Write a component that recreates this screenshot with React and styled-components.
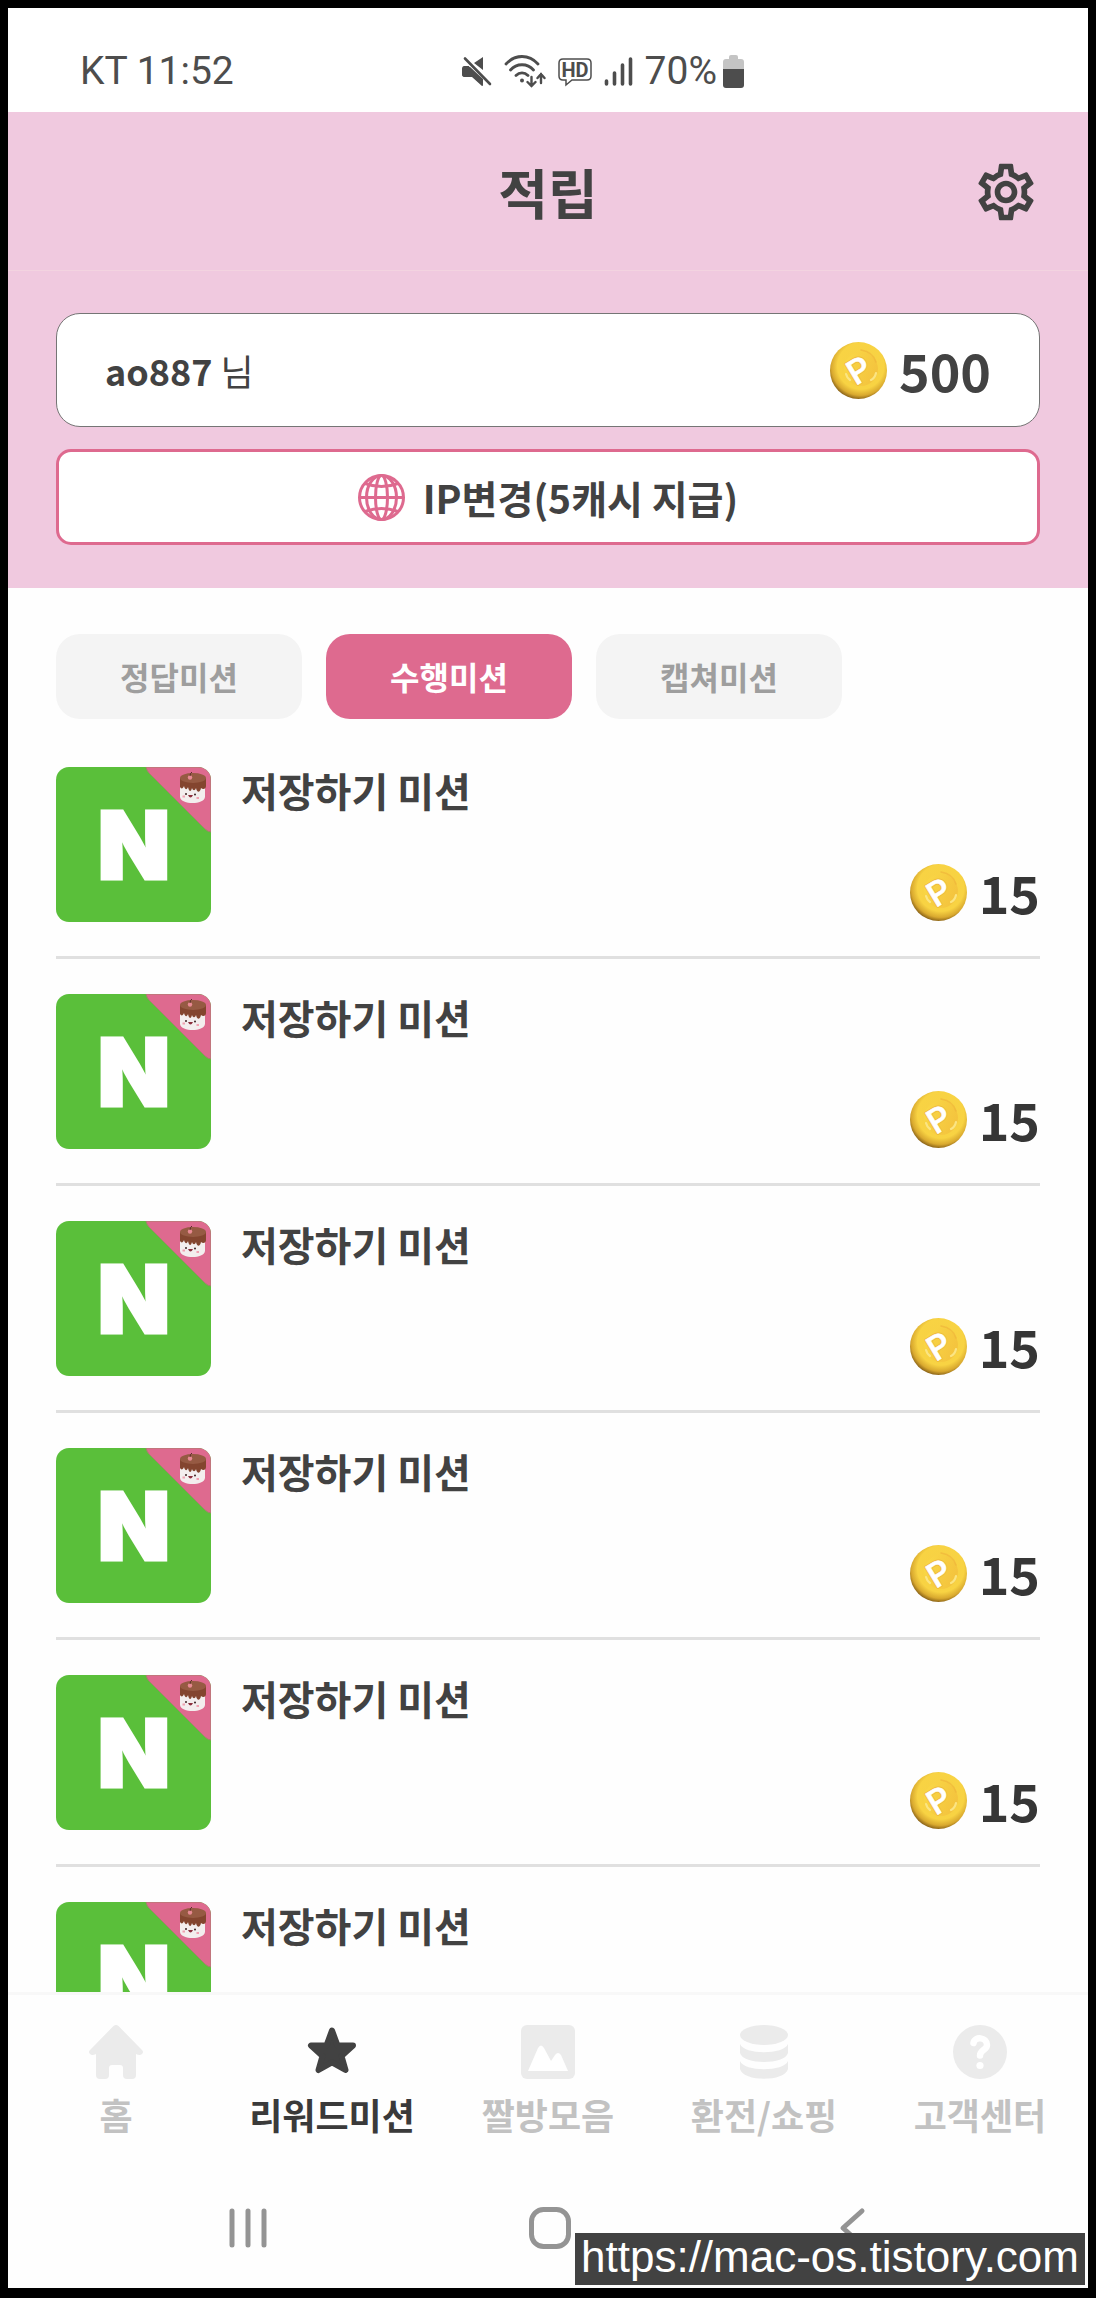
import React, { useId, useState } from 'react'
import styled, { createGlobalStyle, ThemeProvider } from 'styled-components'
import { MdOutlineSettings } from 'react-icons/md'

const theme = {
  colors: {
    text: '#424242',
    pinkLight: '#f0c9df',
    pinkLine: '#f3d3e0',
    pink: '#de6a8f',
    grey: '#9e9e9e',
    greyTab: '#f4f4f4',
    greyLine: '#e0e0e0',
    greyNav: '#c2c2c2',
    greyIcon: '#ebebeb',
    system: '#949494'
  },
  gutter: '48px'
}

const GlobalStyle = createGlobalStyle`
  * {
    box-sizing: border-box;
  }

  body {
    margin: 0;
    background: #000;
    color: ${theme.colors.text};
    font-family: 'Noto Sans CJK KR', 'Noto Sans', sans-serif;
  }

  button {
    padding: 0;
    border: 0;
    background: none;
    color: inherit;
    font: inherit;
    cursor: pointer;
  }

  svg {
    display: block;
    flex: none;
  }
`

const Frame = styled.div`
  position: relative;
  display: flex;
  flex-direction: column;
  height: 100vh;
  border: 8px solid #000;
  border-bottom-width: 10px;
  background: #fefefe;
`

const StatusBar = styled.div`
  display: grid;
  grid-template-columns: 42% 1fr;
  align-items: center;
  padding: 33px 0 11px;
  background: #fff;
  color: #4d4d4d;
  font-family: Roboto, sans-serif;
  font-size: 39px;
  line-height: 60px;
`

const StatusTime = styled.div`
  padding-left: 72px;
`

const StatusIcons = styled.div`
  display: flex;
  align-items: center;
  gap: 12px;
`

const Battery = styled.span`
  display: flex;
  align-items: center;
  gap: 6px;
`

const Header = styled.header`
  display: grid;
  grid-template-columns: 1fr auto 1fr;
  align-items: center;
  padding: 45px ${({ theme }) => theme.gutter} 43px;
  border-bottom: 1px solid ${({ theme }) => theme.colors.pinkLine};
  background: ${({ theme }) => theme.colors.pinkLight};
`

const Title = styled.h1`
  grid-column: 2;
  margin: 0;
  font-size: 54px;
  font-weight: 700;
  line-height: 70px;
`

const SettingsButton = styled.button`
  justify-self: end;
`

const Balance = styled.section`
  display: flex;
  flex-direction: column;
  gap: 22px;
  padding: 42px ${({ theme }) => theme.gutter} 43px;
  background: ${({ theme }) => theme.colors.pinkLight};
`

const UserCard = styled.div`
  display: flex;
  align-items: center;
  justify-content: space-between;
  padding: 26px 48px;
  border: 1px solid #757575;
  border-radius: 24px;
  background: #fff;
  font-size: 36px;
  line-height: 60px;
`

const IpButton = styled.button`
  && {
    display: flex;
    align-items: center;
    justify-content: center;
    gap: 18px;
    padding: 15px;
    border: 3px solid ${({ theme }) => theme.colors.pink};
    border-radius: 15px;
    background: #fff;
    font-size: 39px;
    font-weight: 700;
    line-height: 60px;
  }
`

const Points = styled.div`
  display: flex;
  align-items: center;
  gap: 12px;
  font-size: 52px;
  font-weight: 700;
  line-height: 60px;
`

const Tabs = styled.div`
  display: flex;
  gap: 24px;
  padding: 46px ${({ theme }) => theme.gutter} 48px;
`

const Tab = styled.button`
  && {
    flex: 0 0 25%;
    padding: 12px 0 13px;
    border-radius: 24px;
    background: ${({ theme, $active }) => $active ? theme.colors.pink : theme.colors.greyTab};
    color: ${({ theme, $active }) => $active ? '#fff' : theme.colors.grey};
    font-size: 32px;
    font-weight: 700;
    line-height: 60px;
  }
`

const MissionList = styled.ul`
  flex: 1;
  min-height: 0;
  margin: 0;
  padding: 0 ${({ theme }) => theme.gutter};
  overflow-y: auto;
  list-style: none;
  scrollbar-width: none;
`

const MissionRow = styled.li`
  display: flex;
  gap: 30px;
  margin-bottom: 35px;
  padding-bottom: 34px;
  border-bottom: 3px solid ${({ theme }) => theme.colors.greyLine};
`

const MissionBody = styled.div`
  display: flex;
  flex: 1;
  flex-direction: column;
  justify-content: space-between;
`

const MissionTitle = styled.h2`
  margin: 0;
  font-size: 40px;
  font-weight: 700;
  line-height: 46px;
`

const MissionPoints = styled(Points)`
  align-self: flex-end;
  color: #363636;
`

const BottomNav = styled.nav`
  display: grid;
  grid-template-columns: repeat(5, 1fr);
  padding: 30px 0 29px;
  border-top: 3px solid #f8f8f8;
`

const NavLink = styled.a`
  display: flex;
  flex-direction: column;
  align-items: center;
  gap: 10px;
  color: ${({ theme, $active }) => $active ? '#3a3a3a' : theme.colors.greyNav};
  font-size: 36px;
  font-weight: 700;
  line-height: 50px;
  text-decoration: none;
  white-space: nowrap;

  svg {
    color: ${({ theme, $active }) => $active ? theme.colors.text : theme.colors.greyIcon};
  }
`

const SystemNav = styled.div`
  display: flex;
  justify-content: center;
  gap: 260px;
  padding: 39px 0 39px 4px;
  color: ${({ theme }) => theme.colors.system};
`

const Watermark = styled.div`
  position: absolute;
  right: 3px;
  bottom: 3px;
  padding: 0 6px 5px;
  background: #424242;
  color: #fff;
  font-family: 'Liberation Sans', Arial, sans-serif;
  font-size: 44px;
  line-height: 47px;
`

const MuteIcon = () => <svg width='30' height='32' viewBox='0 0 30 32' fill='currentColor'>
  <path d='M21 2v13l-9-7zM2 11h5l14 14v5l-1 1-10-9H3c-2 0-3-1-3-3v-5c0-2 1-3 2-3z' />
  <path d='M3 3.500 28 29' fill='none' stroke='#fff' strokeWidth='5' />
  <path d='M2 12h6l13 12v7l-10-9H3c-2 0-3-1-3-3v-4c0-2 1-3 2-3z' />
  <path d='M3 3.500 28 29' fill='none' stroke='currentColor' strokeWidth='2.600' strokeLinecap='round' />
</svg>

const WifiIcon = () => <svg width='42' height='34' viewBox='0 0 42 34' fill='none' stroke='currentColor' strokeWidth='2.800' strokeLinecap='round'>
  <path d='M2 10C11 0 25 0 34 10M6.500 16c6-7 17-7 23 0M12 21.500c3.500-3.500 8.500-3.500 12 0' />
  <circle cx='18' cy='26.500' r='2' fill='currentColor' stroke='none' />
  <path d='M27.500 23v9m-4-4 4 4 4-4M37 29v-9m-3.500 4 3.500-4 3.500 4' strokeWidth='2.400' />
</svg>

const HdIcon = () => <svg width='34' height='32' viewBox='0 0 34 32'>
  <path d='M5 4h24q4 0 4 4v13q0 4-4 4H14l-6 5v-5H5q-4 0-4-4V8q0-4 4-4z' fill='none' stroke='currentColor' strokeWidth='1.500' />
  <text x='17' y='21.500' textAnchor='middle' fill='currentColor' fontFamily='Roboto' fontWeight='700' fontSize='20'>HD</text>
</svg>

const SignalIcon = () => <svg width='29' height='32' viewBox='0 0 29 32' stroke='currentColor' strokeWidth='3.600' strokeLinecap='round'>
  <path d='M2.500 26v3M10.500 18v11M18.500 10v19M26.500 4v25' />
</svg>

const BatteryIcon = () => <svg width='21' height='33' viewBox='0 0 21 33'>
  <path d='M6 2q0-2 2-2h5q2 0 2 2v2h3q3 0 3 3v7H0V7q0-3 3-3h3z' fill='#c4c4c4' />
  <path d='M0 14h21v16q0 3-3 3H3q-3 0-3-3z' fill='currentColor' />
</svg>

const GlobeIcon = () => <svg width='47' height='47' viewBox='0 0 47 47' fill='none' stroke='#de6a8f' strokeWidth='3'>
  <circle cx='23.500' cy='23.500' r='22' />
  <ellipse cx='23.500' cy='23.500' rx='6' ry='22' />
  <ellipse cx='23.500' cy='23.500' rx='15' ry='22' />
  <path d='M1 23.500h45M7 9.500q16.500 6 33 0M7 37.500q16.500-6 33 0' />
</svg>

const Coin = () => {
  const id = useId()

  return (
    <svg width='57' height='57' viewBox='0 0 57 57'>
      <defs>
        <radialGradient id={`${id}-body`} cx='0.54' cy='0.42' r='0.6'>
          <stop offset='0' stopColor='#f7d044' />
          <stop offset='0.680' stopColor='#f8d343' />
          <stop offset='0.860' stopColor='#d9a92f' />
          <stop offset='1' stopColor='#7d5714' />
        </radialGradient>
        <linearGradient id={`${id}-well`} x1='0' y1='0' x2='1' y2='0.400'>
          <stop offset='0' stopColor='#fad946' />
          <stop offset='1' stopColor='#f4c43e' />
        </linearGradient>
      </defs>
      <circle cx='28.500' cy='28.500' r='28.500' fill={`url(#${id}-body)`} />
      <circle cx='31' cy='27' r='17' fill={`url(#${id}-well)`} />
      <path d='M31 8q12 2 15 12' fill='none' stroke='#f0b53a' strokeWidth='1.500' strokeLinecap='round' opacity='0.700' />
      <path d='M16 32q1 4 4 6M46 31q-1 5-5 7' fill='none' stroke='#fbe583' strokeWidth='2.200' strokeLinecap='round' />
      <g fontFamily='Roboto' fontWeight='500' fontSize='34' textAnchor='middle' strokeLinejoin='round' transform='rotate(-31 29 28)'>
        <text x='29' y='40' fill='#eebb3c' stroke='#eebb3c' strokeWidth='2.400'>P</text>
        <text x='29' y='40' fill='#fff' stroke='#fff' strokeWidth='0.500'>P</text>
      </g>
    </svg>
  )
}

const MissionIcon = () => {
  const id = useId()

  return (
    <svg width='155' height='155' viewBox='0 0 155 155'>
      <clipPath id={id}>
        <rect width='155' height='155' rx='13' />
      </clipPath>
      <g clipPath={`url(#${id})`}>
        <rect width='155' height='155' fill='#5abf3a' />
        <path d='M90 0q1 4 3 6l56 56q3 3 6 3V0z' fill='#de6a8f' stroke='#a5826a' strokeWidth='1' />
      </g>
      <text x='78' y='112' textAnchor='middle' fill='#fff' stroke='#fff' strokeWidth='3' fontFamily='Inter' fontWeight='900' fontSize='94'>N</text>
      {/* chocolate topped marshmallow */}
      <path d='M124 16v14c1 8 24 8 25 0V16z' fill='#f3eeee' />
      <path d='M124 11v9c1 2 3 2 4-1 1 4 3 4 4 1 1 5 3 5 4 1 1 3 3 3 4 0 1 5 4 5 5 0 2 2 5 1 5-2v-8z' fill='#83452f' />
      <ellipse cx='137' cy='11' rx='13' ry='5' fill='#965a43' />
      <circle cx='134' cy='10.500' r='2.200' fill='#e88a94' />
      <path d='M134 9q0-3 2-4' fill='none' stroke='#5a2f2a' strokeWidth='1' />
      <circle cx='130' cy='27' r='1' fill='#3d2325' />
      <circle cx='139' cy='27.500' r='1' fill='#3d2325' />
      <path d='M132 28q2.500 5 5 0z' fill='#8c2f3d' />
      <path d='M126.500 29.500h2.500M140.500 31h2.500' stroke='#f0a0b0' strokeWidth='1.800' />
    </svg>
  )
}

const HomeIcon = () => <svg width='54' height='54' viewBox='0 0 54 54' fill='currentColor'>
  <path d='M24.500 1q2.500-2 5 0L53 25q2 2 0 4-2 2-6 0v21q0 4-4 4h-5q-4 0-4-4v-7q0-3-3-3h-8q-3 0-3 3v7q0 4-4 4h-5q-4 0-4-4V29q-4 2-6 0-2-2 0-4z' />
</svg>

const StarIcon = () => <svg width='54' height='54' viewBox='0 0 54 54' fill='currentColor' stroke='currentColor' strokeWidth='6' strokeLinejoin='round'>
  <path d='M27 5.500 32.500 20.500 48 20.500 36.500 31 40.500 45 27 37.500 13.500 45 17.500 31 6 20.500 21.500 20.500z' />
</svg>

const ImageIcon = () => <svg width='54' height='54' viewBox='0 0 54 54'>
  <rect width='54' height='54' rx='6' fill='currentColor' />
  <path d='M7 46 17 23q3-5 6 0l7 13 4-6q3-4 6 0l7 16z' fill='#fff' />
</svg>

const CoinsIcon = () => <svg width='48' height='54' viewBox='0 0 48 54' fill='currentColor'>
  <ellipse cx='24' cy='10' rx='24' ry='10' />
  <path d='M0 19c4 11 44 11 48 0v9c-3 12-45 12-48 0zM0 36c4 11 44 11 48 0v8c-3 13-45 13-48 0z' />
</svg>

const HelpIcon = () => <svg width='54' height='54' viewBox='0 0 54 54'>
  <circle cx='27' cy='27' r='27' fill='currentColor' />
  <path d='M20.500 18c1-7 13.500-6 13.500 2 0 5-7 5-7 10.500' fill='none' stroke='#fff' strokeWidth='6.500' strokeLinecap='round' />
  <circle cx='27' cy='40.500' r='3.600' fill='#fff' />
</svg>

const RecentsIcon = () => <svg width='42' height='42' viewBox='0 0 42 42' stroke='currentColor' strokeWidth='5' strokeLinecap='round'>
  <path d='M5 4v34M21 4v34M37 4v34' />
</svg>

const SquareIcon = () => <svg width='42' height='42' viewBox='0 0 42 42' fill='none' stroke='currentColor' strokeWidth='5'>
  <rect x='2.500' y='2.500' width='37' height='37' rx='12' />
</svg>

const BackIcon = () => <svg width='42' height='42' viewBox='0 0 42 42' fill='none' stroke='currentColor' strokeWidth='5' strokeLinecap='round' strokeLinejoin='round'>
  <path d='M31 4 12 21l19 17' />
</svg>

const tabs = ['정답미션', '수행미션', '캡쳐미션']

const missions = [1, 2, 3, 4, 5, 6].map((id) => ({ id, title: '저장하기 미션', points: 15 }))

const navItems = [
  { label: '홈', href: '#home', Icon: HomeIcon },
  { label: '리워드미션', href: '#reward', Icon: StarIcon, active: true },
  { label: '짤방모음', href: '#images', Icon: ImageIcon },
  { label: '환전/쇼핑', href: '#shop', Icon: CoinsIcon },
  { label: '고객센터', href: '#help', Icon: HelpIcon }
]

const App = () => {
  const [activeTab, setActiveTab] = useState('수행미션')

  return (
    <ThemeProvider theme={theme}>
      <GlobalStyle />
      <Frame>
        <StatusBar>
          <StatusTime>KT 11:52</StatusTime>
          <StatusIcons>
            <MuteIcon />
            <WifiIcon />
            <HdIcon />
            <SignalIcon />
            <Battery>70%<BatteryIcon /></Battery>
          </StatusIcons>
        </StatusBar>

        <Header>
          <Title>적립</Title>
          <SettingsButton aria-label='설정'><MdOutlineSettings size={68} /></SettingsButton>
        </Header>

        <Balance>
          <UserCard>
            <span><strong>ao887</strong> 님</span>
            <Points><Coin />500</Points>
          </UserCard>
          <IpButton><GlobeIcon />IP변경(5캐시 지급)</IpButton>
        </Balance>

        <Tabs>
          {tabs.map((tab) => <Tab key={tab} $active={tab === activeTab} onClick={() => setActiveTab(tab)}>
            {tab}
          </Tab>)}
        </Tabs>

        <MissionList>
          {missions.map((mission) => <MissionRow key={mission.id}>
            <MissionIcon />
            <MissionBody>
              <MissionTitle>{mission.title}</MissionTitle>
              <MissionPoints><Coin />{mission.points}</MissionPoints>
            </MissionBody>
          </MissionRow>)}
        </MissionList>

        <BottomNav>
          {navItems.map(({ label, href, Icon, active }) => <NavLink key={label} href={href} $active={active}>
            <Icon />
            {label}
          </NavLink>)}
        </BottomNav>

        <SystemNav>
          <button aria-label='최근 앱'><RecentsIcon /></button>
          <button aria-label='홈 화면'><SquareIcon /></button>
          <button aria-label='뒤로'><BackIcon /></button>
        </SystemNav>

        <Watermark>https://mac-os.tistory.com</Watermark>
      </Frame>
    </ThemeProvider>
  )
}

export default App
